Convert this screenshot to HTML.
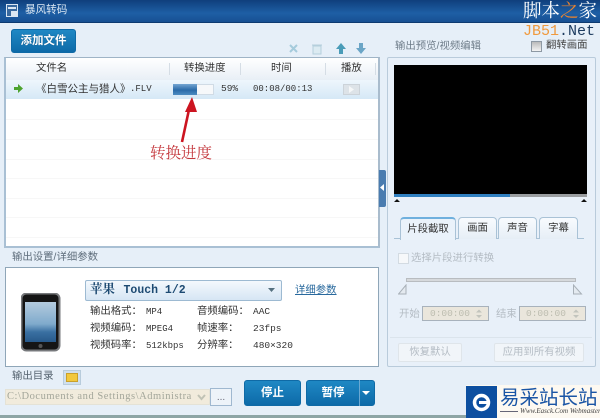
<!DOCTYPE html>
<html><head><meta charset="utf-8">
<style>
*{box-sizing:border-box}
html,body{margin:0;padding:0}
body{width:600px;height:418px;overflow:hidden;position:relative;background:#e6eff8;font-family:"Liberation Sans","Noto Sans CJK SC",sans-serif;font-size:10.4px;color:#333}
#w{position:absolute;left:0;top:0;width:600px;height:418px;overflow:hidden;filter:blur(0.35px)}
.a{position:absolute;white-space:nowrap}
.m{font-family:"Liberation Mono","Noto Sans CJK SC",monospace}
.btn{position:absolute;border-radius:3px;background:linear-gradient(#1f88c4,#0d6aa8);color:#fff;font-weight:bold;text-align:center;border:1px solid #0f6aa6}
.line{position:absolute;left:6px;width:372px;height:1px;background:#f7f7f7}
.tab{position:absolute;top:217px;height:22px;border:1px solid #a9c2d6;border-bottom:0;border-radius:4px 4px 0 0;background:linear-gradient(#f8fbfe,#e6eef6);font-size:10.4px;text-align:center;line-height:21px;color:#333}
.g{color:#b4bcc4}
</style></head><body><div id="w">
<div class="a" style="left:0;top:0;width:600px;height:23px;background:linear-gradient(#0f3f7c,#1e5fa5 60%,#174f92);border-bottom:1px solid #0d3a70"></div>
<svg class="a" style="left:6px;top:4px" width="13" height="14"><rect x="0.5" y="0.5" width="11" height="12" fill="#39699f" stroke="#dbe6f2"/><rect x="2" y="3" width="8" height="2" fill="#dbe6f2"/><rect x="5" y="7" width="7" height="6" fill="#dbe6f2"/></svg>
<div class="a" style="left:25px;top:3px;font-size:10.6px;line-height:15px;color:#dce8f4">暴风转码</div>

<div class="a" style="left:523px;top:-1px;font-size:18.5px;line-height:23px;letter-spacing:0;color:#fff;font-family:'Noto Serif CJK SC',serif">脚本<span style="color:#f0852c">之</span>家</div>
<div class="a" style="left:523px;top:23px;font-size:15px;line-height:18px;font-family:'Liberation Mono',monospace;color:#1b3a5e"><span style="color:#f09a3e">JB51</span>.Net</div>

<div class="btn" style="left:11px;top:29px;width:65px;height:24px;line-height:22px;font-size:11.5px;text-shadow:0 0 1px #0a4a78">添加文件</div>

<svg class="a" style="left:288px;top:42px" width="84" height="14">
<path d="M2 3 L9 10 M9 3 L2 10" stroke="#a5cbdc" stroke-width="2"/>
<path d="M24 3h10M25 4h8v8h-8z" fill="#dcebf2" stroke="#b5cfdc" stroke-width="1"/>
<path d="M53 1l5 6h-3v5h-4V7h-3z" fill="#4a9cb8"/>
<path d="M71 1h4v5h3l-5 6-5-6h3z" fill="#6ba5c6"/>
</svg>

<div class="a" style="left:395px;top:40px;line-height:14px;color:#6f7d8a">输出预览/视频编辑</div>
<div class="a" style="left:531px;top:41px;width:11px;height:11px;border:1px solid #8e99a4;background:linear-gradient(#bbb,#f4f4f4)"></div>
<div class="a" style="left:546px;top:39px;line-height:14px;color:#444">翻转画面</div>

<!-- list panel -->
<div class="a" style="left:4px;top:57px;width:376px;height:191px;background:#fff;border-style:solid;border-width:1px 2px 2px 2px;border-color:#9fb4c6 #a9bccd #a9c0d4 #a9c0d4"></div>
<div class="a" style="left:6px;top:58px;width:372px;height:22px;background:linear-gradient(#fff,#e8eff6)"></div>
<div class="a" style="left:36px;top:61px;line-height:15px;color:#333">文件名</div>
<div class="a" style="left:184px;top:61px;line-height:15px;color:#333">转换进度</div>
<div class="a" style="left:271px;top:61px;line-height:15px;color:#333">时间</div>
<div class="a" style="left:341px;top:61px;line-height:15px;color:#333">播放</div>
<div class="a" style="left:169px;top:63px;width:1px;height:12px;background:#d5dde5"></div>
<div class="a" style="left:240px;top:63px;width:1px;height:12px;background:#d5dde5"></div>
<div class="a" style="left:325px;top:63px;width:1px;height:12px;background:#d5dde5"></div>
<div class="a" style="left:375px;top:63px;width:1px;height:12px;background:#d5dde5"></div>

<div class="a" style="left:6px;top:80px;width:372px;height:19px;background:linear-gradient(#eef6fc,#d5e8f6)"></div>
<svg class="a" style="left:14px;top:84px" width="10" height="10"><path d="M0 3h4V0l5 4.5-5 4.5V6H0z" fill="#4da32e"/></svg>
<div class="a" style="left:36px;top:81px;line-height:16px;font-size:10.5px;color:#333">《白雪公主与猎人》</div>
<div class="a m" style="left:130px;top:82px;font-size:9px;line-height:14px;letter-spacing:0">.FLV</div>
<div class="a" style="left:173px;top:84px;width:41px;height:11px;background:#f6f8fa;border:1px solid #d0dbe5"></div>
<div class="a" style="left:173px;top:84px;width:24px;height:11px;background:linear-gradient(#74a6d2,#2a6aa8 55%,#4d8cc2)"></div>
<div class="a m" style="left:221px;top:82px;font-size:9.5px;line-height:14px;color:#333">59%</div>
<div class="a m" style="left:253px;top:82px;font-size:9px;line-height:14px;color:#333">00:08/00:13</div>
<div class="a" style="left:343px;top:84px;width:17px;height:11px;background:#dde3e8;border:1px solid #ccd3d9"></div>
<svg class="a" style="left:349px;top:86px" width="6" height="7"><path d="M0 0l5 3.5L0 7z" fill="#f5f7f8"/></svg>

<div class="line" style="top:119px"></div>
<div class="line" style="top:139px"></div>
<div class="line" style="top:159px"></div>
<div class="line" style="top:178px"></div>
<div class="line" style="top:198px"></div>
<div class="line" style="top:217px"></div>
<div class="line" style="top:237px"></div>

<svg class="a" style="left:175px;top:95px" width="30" height="50"><path d="M7 47 L15 10" stroke="#cc1420" stroke-width="2.6"/><path d="M17 2 L10 17 L22 17z" fill="#cc1420"/></svg>
<div class="a" style="left:150px;top:142px;font-size:15.5px;line-height:20px;color:#c4373c;font-family:'Noto Serif CJK SC',serif">转换进度</div>

<!-- splitter -->
<div class="a" style="left:379px;top:170px;width:7px;height:37px;background:#4a7cb0;border-radius:0 2px 2px 0"></div>
<svg class="a" style="left:380px;top:184px" width="5" height="8"><path d="M4 0v7L0 3.5z" fill="#fff"/></svg>

<!-- settings -->
<div class="a" style="left:12px;top:250px;line-height:15px;color:#5f6e7c">输出设置/详细参数</div>
<div class="a" style="left:5px;top:267px;width:374px;height:100px;background:#fff;border:1px solid #8fa6b8"></div>
<svg class="a" style="left:21px;top:293px" width="40" height="59">
<defs><linearGradient id="sc" x1="0" y1="0" x2="0" y2="1"><stop offset="0" stop-color="#b4cbde"/><stop offset="0.55" stop-color="#7faacc"/><stop offset="0.75" stop-color="#3a70a2"/><stop offset="1" stop-color="#27598a"/></linearGradient></defs>
<rect x="0.5" y="0.5" width="38" height="57" rx="5" fill="#151515" stroke="#77797c" stroke-width="2"/>
<rect x="4" y="9" width="31" height="40" fill="url(#sc)"/>
<circle cx="19.5" cy="53" r="2" fill="#555"/>
</svg>
<div class="a" style="left:85px;top:280px;width:197px;height:21px;background:linear-gradient(#f4f9fd,#d6e6f4);border:1px solid #9dbad2;border-radius:2px"></div>
<div class="a" style="left:90px;top:281px;font-size:12.5px;line-height:18px;font-weight:bold;color:#1d4a72;font-family:'Liberation Mono','Noto Serif CJK SC',monospace;">苹果 <span style="font-size:11.5px;margin-left:1px">Touch 1/2</span></div>
<svg class="a" style="left:268px;top:288px" width="8" height="5"><path d="M0 0h7L3.5 4z" fill="#55707f"/></svg>
<div class="a" style="left:295px;top:283px;line-height:15px;color:#2a6a9e;text-decoration:underline">详细参数</div>

<div class="a" style="left:90px;top:304px;line-height:15px;color:#333">输出格式：</div>
<div class="a m" style="left:146px;top:305px;font-size:9px;line-height:14px">MP4</div>
<div class="a" style="left:197px;top:304px;line-height:15px;color:#333">音频编码：</div>
<div class="a m" style="left:253px;top:305px;font-size:9.5px;line-height:14px">AAC</div>
<div class="a" style="left:90px;top:321px;line-height:15px;color:#333">视频编码：</div>
<div class="a m" style="left:146px;top:322px;font-size:9px;line-height:14px">MPEG4</div>
<div class="a" style="left:197px;top:321px;line-height:15px;color:#333">帧速率：</div>
<div class="a m" style="left:253px;top:322px;font-size:9.5px;line-height:14px">23fps</div>
<div class="a" style="left:90px;top:338px;line-height:15px;color:#333">视频码率：</div>
<div class="a m" style="left:146px;top:339px;font-size:9px;line-height:14px">512kbps</div>
<div class="a" style="left:197px;top:338px;line-height:15px;color:#333">分辨率：</div>
<div class="a m" style="left:253px;top:339px;font-size:9.5px;line-height:14px">480×320</div>

<!-- output dir -->
<div class="a" style="left:12px;top:369px;line-height:15px;color:#55636f">输出目录</div>
<div class="a" style="left:63px;top:370px;width:18px;height:15px;background:#d0dfec;border:1px solid #b8ccdc"></div>
<div class="a" style="left:66px;top:373px;width:12px;height:9px;background:#f2c83c;border:1px solid #c9a02a"></div>
<div class="a" style="left:5px;top:389px;width:205px;height:16px;background:#f1ebdc;border:1px solid #e4e2d6"></div>
<div class="a" style="left:7px;top:390px;font-family:'Liberation Serif',serif;font-size:10.5px;line-height:14px;color:#a3a69a;width:187px;overflow:hidden;letter-spacing:0.55px">C:\Documents and Settings\Administra</div>
<svg class="a" style="left:197px;top:394px" width="9" height="7"><path d="M1 1l3.5 4L8 1" stroke="#c0c2b5" stroke-width="2" fill="none"/></svg>
<div class="a" style="left:210px;top:388px;width:22px;height:18px;background:#edf3f9;border:1px solid #9fb8d0;text-align:center;line-height:18px;color:#667;font-size:10px">...</div>
<div class="btn" style="left:244px;top:380px;width:57px;height:26px;line-height:24px;font-size:11.5px">停止</div>
<div class="btn" style="left:306px;top:380px;width:69px;height:26px;line-height:24px;font-size:11.5px;padding-right:15px">暂停</div>
<div class="a" style="left:359px;top:380px;width:1px;height:26px;background:#6aa8d2"></div>
<svg class="a" style="left:362px;top:391px" width="9" height="5"><path d="M0 0h8L4 4z" fill="#fff"/></svg>

<!-- right panel -->
<div class="a" style="left:387px;top:57px;width:209px;height:310px;border:1px solid #b9cbdb;border-radius:2px;background:#e8f0f9"></div>
<div class="a" style="left:394px;top:65px;width:193px;height:129px;background:#000"></div>
<div class="a" style="left:394px;top:194px;width:193px;height:3px;background:#9a9da0"></div>
<div class="a" style="left:394px;top:194px;width:116px;height:3px;background:#2f7fc0"></div>
<svg class="a" style="left:394px;top:199px" width="194" height="4"><path d="M0 3l3-3 3 3zM187 3l3-3 3 3z" fill="#111"/></svg>

<div class="a" style="left:394px;top:238px;width:190px;height:1px;background:#a9c2d6"></div>
<div class="tab" style="left:400px;width:56px;height:23px;background:#eaf2fa;border-top:2px solid #6fb0de">片段截取</div>
<div class="tab" style="left:458px;width:39px">画面</div>
<div class="tab" style="left:498px;width:39px">声音</div>
<div class="tab" style="left:539px;width:39px">字幕</div>

<div class="a" style="left:398px;top:253px;width:11px;height:11px;background:#f6f8fa;border:1px solid #d3dbe2"></div>
<div class="a g" style="left:411px;top:251px;line-height:15px">选择片段进行转换</div>
<div class="a" style="left:406px;top:278px;width:170px;height:4px;background:#d6d9dc;border:1px solid #b8bcc0"></div>
<svg class="a" style="left:398px;top:284px" width="186" height="12"><path d="M8 1v9H0.5zM175.5 1v9h8z" fill="#e4eaf0" stroke="#a8b0b8"/></svg>

<div class="a g" style="left:399px;top:307px;line-height:15px">开始</div>
<div class="a" style="left:422px;top:306px;width:67px;height:15px;background:#eae6dc;border:1px solid #a8b2bc"></div>
<div class="a g m" style="left:430px;top:307px;font-size:9.5px;line-height:14px;color:#bdbdb0">0:00:00</div>
<div class="a g" style="left:496px;top:307px;line-height:15px">结束</div>
<div class="a" style="left:519px;top:306px;width:67px;height:15px;background:#eae6dc;border:1px solid #a8b2bc"></div>
<div class="a g m" style="left:526px;top:307px;font-size:9.5px;line-height:14px;color:#bdbdb0">0:00:00</div>
<svg class="a" style="left:476px;top:309px" width="110" height="10"><path d="M0 3.5l3-3 3 3zM0 6l3 3 3-3zM97 3.5l3-3 3 3zM97 6l3 3 3-3z" fill="#c2c4bd"/></svg>

<div class="a" style="left:390px;top:337px;width:202px;height:1px;background:#dbe4ec"></div>
<div class="a g" style="left:398px;top:343px;width:64px;height:19px;border:1px solid #dfe5ea;border-radius:2px;background:#f1f5f9;text-align:center;line-height:17px">恢复默认</div>
<div class="a g" style="left:494px;top:343px;width:90px;height:19px;border:1px solid #dfe5ea;border-radius:2px;background:#f1f5f9;text-align:center;line-height:17px">应用到所有视频</div>

<!-- bottom border -->
<div class="a" style="left:0;top:415px;width:600px;height:3px;background:#8da5a5"></div>

<!-- watermark -->
<div class="a" style="left:466px;top:385px;width:134px;height:33px;background:#fdf9f1"></div>
<div class="a" style="left:466px;top:386px;width:31px;height:32px;background:#0d4fa0"></div>
<svg class="a" style="left:471px;top:392px" width="21" height="21"><circle cx="10.5" cy="10.5" r="7" fill="none" stroke="#fff" stroke-width="3.5"/><rect x="8" y="9" width="10" height="3" fill="#fff"/></svg>
<div class="a" style="left:500px;top:384px;font-size:19.5px;line-height:24px;font-weight:normal;color:#1a55a5;font-family:'Noto Sans CJK SC',sans-serif">易采站长站</div>
<div class="a" style="left:500px;top:411px;width:18px;height:1px;background:#667"></div>
<div class="a" style="left:520px;top:407px;font-size:7px;line-height:9px;font-family:'Liberation Serif',serif;font-style:italic;color:#444">Www.Easck.Com Webmaster</div>
</div></body></html>
